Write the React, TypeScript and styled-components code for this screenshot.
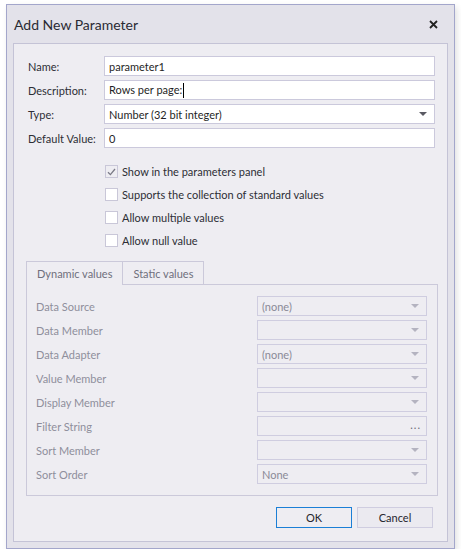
import styled, { createGlobalStyle } from "styled-components";

const GlobalStyle = createGlobalStyle`
  html, body {
    margin: 0;
    padding: 0;
    background: #ffffff;
  }
  body {
    font-family: Lato, "Noto Sans", sans-serif;
    font-size: 11px;
    color: #2d2d35;
  }
`;

const Window = styled.div`
  margin: 4px 0 0 6px;
  width: 447px;
  height: 543px;
  border: 1px solid #a3a6cb;
  background: #e3e2ea;
  display: flex;
  flex-direction: column;
  box-shadow: 2px 3px 6px rgba(0, 0, 0, 0.12);
`;

const TitleBar = styled.div`
  height: 38px;
  display: flex;
  align-items: center;
  justify-content: space-between;
  padding: 0 16px 0 7px;
`;

const Title = styled.span`
  font-size: 14px;
  color: #2a2a33;
`;

const CloseIcon = styled.svg`
  width: 9px;
  height: 9px;
`;

const Body = styled.div`
  flex: 1;
  margin: 0 6px 6px 6px;
  border: 1px solid #c4c3d6;
  background: #eeedf2;
  padding: 12px 9px 13px 12px;
  display: flex;
  flex-direction: column;
`;

const FormGrid = styled.div`
  display: grid;
  grid-template-columns: 76px 1fr;
  row-gap: 4px;
  align-items: center;
  margin: 0 3px 0 2px;
`;

const Label = styled.span<{ $disabled?: boolean }>`
  color: ${(p) => (p.$disabled ? "#8f8f9c" : "#2d2d35")};
  white-space: nowrap;
  padding-top: 1px;
`;

const Field = styled.div<{ $disabled?: boolean }>`
  height: 18px;
  border: 1px solid ${(p) => (p.$disabled ? "#cfcde0" : "#cbc9dc")};
  background: ${(p) => (p.$disabled ? "#eeedf2" : "#ffffff")};
  display: flex;
  align-items: center;
  padding: 0 4px;
  color: ${(p) => (p.$disabled ? "#8a8a97" : "#1f1f26")};
`;

const FieldText = styled.span`
  flex: 1;
  white-space: nowrap;
  padding-top: 1px;
`;

const Caret = styled.span`
  display: inline-block;
  width: 1px;
  height: 15px;
  background: #000;
  vertical-align: middle;
  margin-left: 1px;
`;

const Arrow = styled.span<{ $disabled?: boolean }>`
  width: 0;
  height: 0;
  border-left: 4px solid transparent;
  border-right: 4px solid transparent;
  border-top: 4px solid ${(p) => (p.$disabled ? "#b4b3c0" : "#5a5a63")};
  margin-right: 3px;
`;

const Dots = styled.span`
  color: #6c6c78;
  letter-spacing: 1px;
  font-size: 11px;
  margin-right: 1px;
  line-height: 1;
  padding-bottom: 4px;
`;

const Checks = styled.div`
  display: flex;
  flex-direction: column;
  gap: 10px;
  margin: 17px 0 0 79px;
`;

const CheckRow = styled.label`
  display: flex;
  align-items: center;
  gap: 4px;
  height: 13px;
`;

const Box = styled.span<{ $checked?: boolean }>`
  width: 11px;
  height: 11px;
  border: 1px solid #c9c7d8;
  background: ${(p) => (p.$checked ? "#eeedf2" : "#ffffff")};
  display: flex;
  align-items: center;
  justify-content: center;
`;

const Tabs = styled.div`
  margin: 14px 0 0 0;
  display: flex;
  flex-direction: column;
`;

const TabHeader = styled.div`
  display: flex;
  height: 24px;
`;

const Tab = styled.div<{ $active?: boolean }>`
  padding: 0 10px;
  display: flex;
  align-items: center;
  border: 1px solid #cbc9da;
  border-bottom: ${(p) => (p.$active ? "none" : "1px solid #cbc9da")};
  margin-left: ${(p) => (p.$active ? "0" : "-1px")};
  color: #6f6f7c;
  background: #eeedf2;
  position: relative;
  z-index: ${(p) => (p.$active ? 1 : 0)};
`;

const TabPanel = styled.div`
  border: 1px solid #cbc9da;
  margin-top: -1px;
  padding: 11px 10px 11px 9px;
  display: grid;
  grid-template-columns: 1fr 170px;
  row-gap: 4px;
  align-items: center;
`;

const Footer = styled.div`
  display: flex;
  justify-content: flex-end;
  gap: 5px;
  margin-top: auto;
  padding-right: 5px;
`;

const Button = styled.button<{ $primary?: boolean }>`
  width: 76px;
  height: 21px;
  font-family: inherit;
  font-size: 11px;
  color: #26262e;
  background: ${(p) => (p.$primary ? "#eeedf2" : "#ebeaf0")};
  border: 1px solid ${(p) => (p.$primary ? "#1b7fd6" : "#cfcde0")};
  padding: 0;
`;

const checks = [
  { text: "Show in the parameters panel", checked: true },
  { text: "Supports the collection of standard values", checked: false },
  { text: "Allow multiple values", checked: false },
  { text: "Allow null value", checked: false },
];

const dynamicRows: { label: string; value?: string; kind: "combo" | "dots" }[] = [
  { label: "Data Source", value: "(none)", kind: "combo" },
  { label: "Data Member", kind: "combo" },
  { label: "Data Adapter", value: "(none)", kind: "combo" },
  { label: "Value Member", kind: "combo" },
  { label: "Display Member", kind: "combo" },
  { label: "Filter String", kind: "dots" },
  { label: "Sort Member", kind: "combo" },
  { label: "Sort Order", value: "None", kind: "combo" },
];

export default function App() {
  return (
    <>
      <GlobalStyle />
      <Window>
        <TitleBar>
          <Title>Add New Parameter</Title>
          <CloseIcon viewBox="0 0 9 9">
            <path d="M1 1L8 8M8 1L1 8" stroke="#222" strokeWidth="1.8" />
          </CloseIcon>
        </TitleBar>
        <Body>
          <FormGrid>
            <Label>Name:</Label>
            <Field>
              <FieldText>parameter1</FieldText>
            </Field>
            <Label>Description:</Label>
            <Field>
              <FieldText>
                Rows per page:<Caret />
              </FieldText>
            </Field>
            <Label>Type:</Label>
            <Field>
              <FieldText>Number (32 bit integer)</FieldText>
              <Arrow />
            </Field>
            <Label>Default Value:</Label>
            <Field>
              <FieldText>0</FieldText>
            </Field>
          </FormGrid>

          <Checks>
            {checks.map((c) => (
              <CheckRow key={c.text}>
                <Box $checked={c.checked}>
                  {c.checked && (
                    <svg width="9" height="8" viewBox="0 0 9 8">
                      <path d="M1 4.2L3.4 6.6L8 1" stroke="#7a7a86" strokeWidth="1.3" fill="none" />
                    </svg>
                  )}
                </Box>
                <span>{c.text}</span>
              </CheckRow>
            ))}
          </Checks>

          <Tabs>
            <TabHeader>
              <Tab $active>Dynamic values</Tab>
              <Tab>Static values</Tab>
            </TabHeader>
            <TabPanel>
              {dynamicRows.map((r) => (
                <>
                  <Label key={r.label + "l"} $disabled>
                    {r.label}
                  </Label>
                  <Field key={r.label + "f"} $disabled>
                    <FieldText>{r.value}</FieldText>
                    {r.kind === "dots" ? <Dots>...</Dots> : <Arrow $disabled />}
                  </Field>
                </>
              ))}
            </TabPanel>
          </Tabs>

          <Footer>
            <Button $primary>OK</Button>
            <Button>Cancel</Button>
          </Footer>
        </Body>
      </Window>
    </>
  );
}
